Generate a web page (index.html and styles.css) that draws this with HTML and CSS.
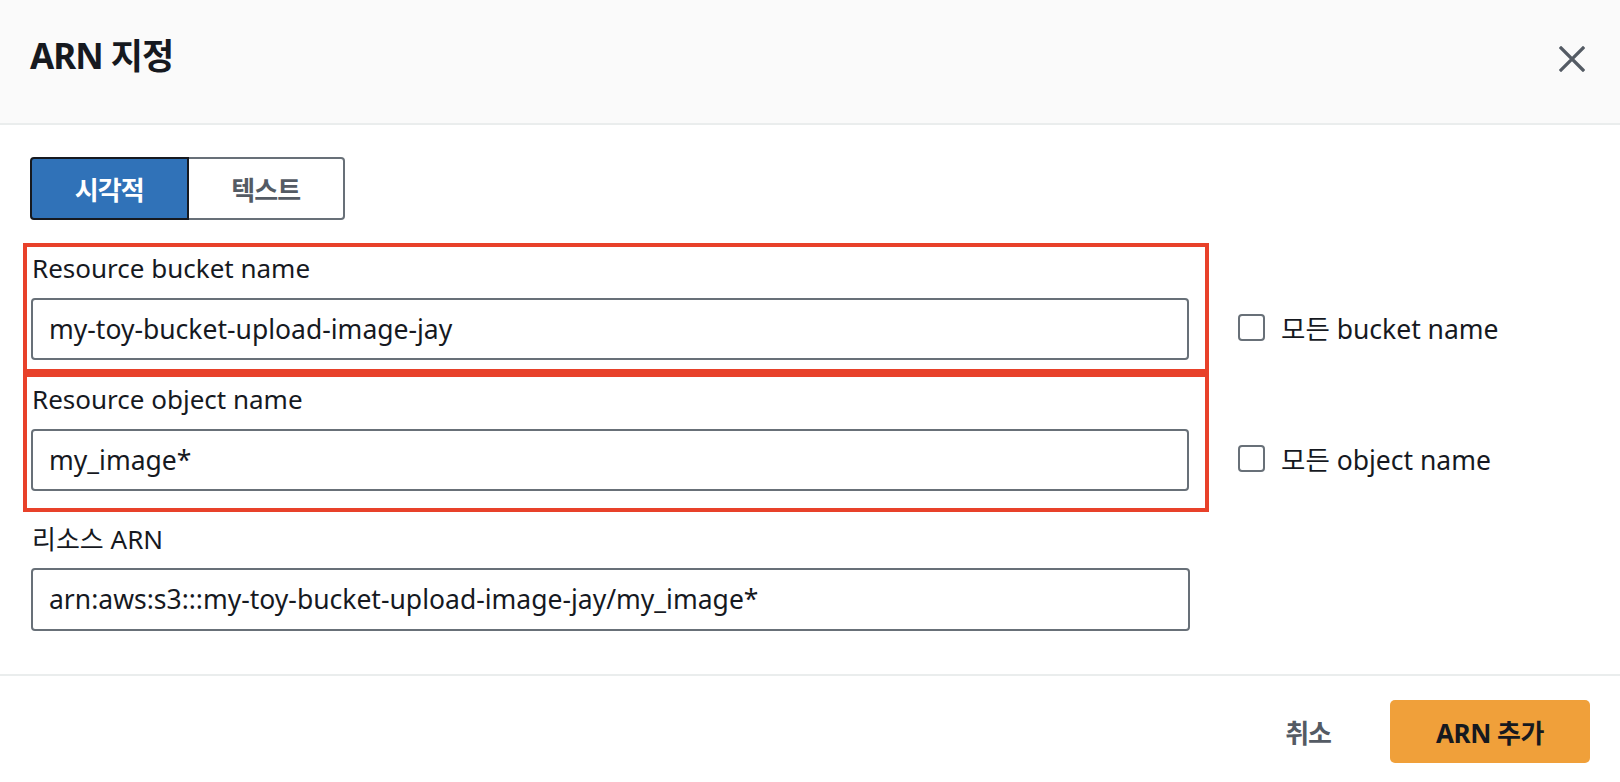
FILE: index.html
```html
<!DOCTYPE html>
<html lang="ko">
<head>
<meta charset="utf-8">
<title>ARN 지정</title>
<link rel="stylesheet" href="styles.css">
</head>
<body>
<div class="modal">
  <header class="modal-header">
    <h1 class="title">ARN 지정</h1>
    <button class="close" aria-label="닫기">
      <svg width="26" height="26" viewBox="0 0 26 26"><path d="M2 2 L24 24 M24 2 L2 24" stroke="#545b64" stroke-width="3.2" fill="none" stroke-linecap="square"/></svg>
    </button>
  </header>
  <main class="modal-body">
    <div class="segment">
      <button class="seg seg-on">시각적</button>
      <button class="seg seg-off">텍스트</button>
    </div>

    <div class="field-row">
      <div class="annot annot-1">
        <div class="label">Resource bucket name</div>
        <div class="input">my-toy-bucket-upload-image-jay</div>
      </div>
      <div class="check-col check-col-1">
        <label class="check"><span class="box"></span><span class="check-text">모든 bucket name</span></label>
      </div>
    </div>

    <div class="field-row">
      <div class="annot annot-2">
        <div class="label">Resource object name</div>
        <div class="input">my_image*</div>
      </div>
      <div class="check-col check-col-2">
        <label class="check"><span class="box"></span><span class="check-text">모든 object name</span></label>
      </div>
    </div>

    <div class="plain-field">
      <div class="label">리소스 ARN</div>
      <div class="input input-wide">arn:aws:s3:::my-toy-bucket-upload-image-jay/my_image*</div>
    </div>
  </main>
  <footer class="modal-footer">
    <button class="cancel">취소</button>
    <button class="primary">ARN 추가</button>
  </footer>
</div>
</body>
</html>
```
FILE: styles.css
```css
* { box-sizing: border-box; }
html, body { margin: 0; padding: 0; background: #ffffff; }
body {
  font-family: "Noto Sans", "Noto Sans CJK KR", sans-serif;
  color: #16191f;
  width: 1620px;
  height: 782px;
  overflow: hidden;
}
button { font-family: inherit; }

.modal-header {
  height: 125px;
  background: #fafafa;
  border-bottom: 2px solid #eaeded;
  padding: 33px 30px 0 30px;
  display: flex;
  justify-content: space-between;
  align-items: flex-start;
}
.title {
  margin: 0;
  font-size: 35px;
  line-height: 46px;
  font-weight: 700;
  letter-spacing: -1px;
}
.close {
  margin-top: 13px;
  margin-right: 5px;
  padding: 0;
  border: 0;
  background: transparent;
  width: 26px;
  height: 26px;
  display: flex;
}

.modal-body {
  padding: 32px 0 43px 0;
}
.segment {
  display: flex;
  margin-left: 30px;
  width: 315px;
  height: 63px;
  margin-bottom: 23px;
}
.seg {
  flex: 1;
  font-size: 26px;
  font-weight: 700;
  letter-spacing: -1px;
  border: 2px solid #687078;
  padding: 0;
}
.seg-on {
  background: #3072b8;
  color: #ffffff;
  border-color: #16191f;
  border-radius: 4px 0 0 4px;
}
.seg-off {
  background: #ffffff;
  color: #545b64;
  border-left: 0;
  border-radius: 0 4px 4px 0;
}

.field-row {
  display: flex;
  align-items: flex-end;
}
.annot {
  margin-left: 23px;
  width: 1186px;
  border: 4px solid #e8412a;
  padding: 6px 16px 9px 4px;
}
.annot-2 {
  padding-top: 7px;
  padding-bottom: 17px;
}
.label {
  font-size: 26px;
  line-height: 30px;
  padding-left: 1px;
  margin-bottom: 15px;
}
.input {
  height: 62px;
  border: 2px solid #687078;
  border-radius: 4px;
  padding-left: 16px;
  font-size: 26.5px;
  line-height: 58px;
  white-space: nowrap;
  overflow: hidden;
}
.check-col {
  margin-left: 29px;
  height: 62px;
  display: flex;
  align-items: center;
}
.check-col-1 { margin-bottom: 13px; }
.check-col-2 { margin-bottom: 21px; }
.check {
  display: flex;
  align-items: center;
}
.box {
  width: 27px;
  height: 27px;
  border: 2px solid #687078;
  border-radius: 4px;
  margin-right: 16px;
  margin-top: -3px;
}
.check-text {
  font-size: 26.5px;
  line-height: 30px;
}

.plain-field {
  margin-top: 12px;
  padding-left: 31px;
  width: 1190px;
}
.plain-field .label { margin-bottom: 14px; }
.input-wide { height: 63px; }

.modal-footer {
  border-top: 2px solid #eaeded;
  padding: 24px 30px 0 0;
  display: flex;
  justify-content: flex-end;
  align-items: center;
}
.cancel {
  border: 0;
  background: transparent;
  color: #545b64;
  font-size: 26px;
  font-weight: 700;
  letter-spacing: -1px;
  padding: 0;
  margin-right: 59px;
}
.primary {
  width: 200px;
  height: 63px;
  border: 0;
  border-radius: 5px;
  background: #f0a03a;
  color: #16191f;
  font-size: 26px;
  font-weight: 700;
  letter-spacing: -0.5px;
  padding: 0;
}
```
